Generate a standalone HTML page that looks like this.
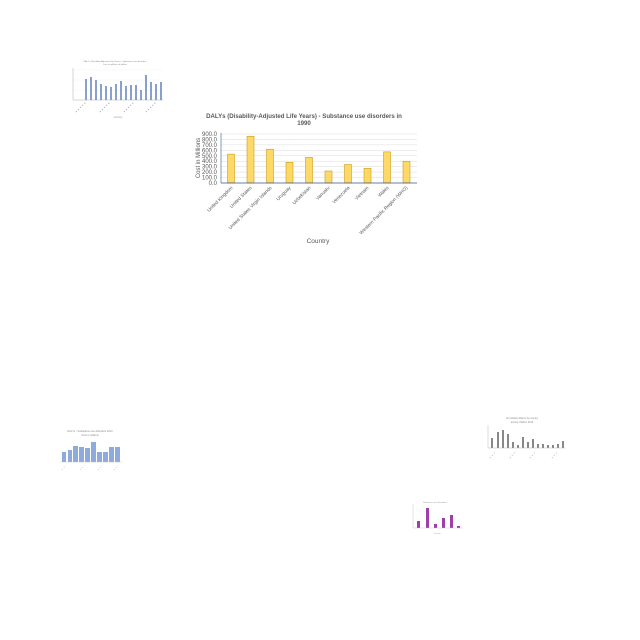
<!DOCTYPE html>
<html><head><meta charset="utf-8"><style>
html,body{margin:0;padding:0;background:#fff;width:640px;height:640px;overflow:hidden}
svg{display:block;font-family:"Liberation Sans",sans-serif}
</style></head><body>
<svg width="640" height="640" viewBox="0 0 640 640">
<g fill="#595959">
<text x="304" y="118" font-size="6.1" font-weight="bold" text-anchor="middle">DALYs (Disability-Adjusted Life Years) - Substance use disorders in</text>
<text x="304" y="125" font-size="6.1" font-weight="bold" text-anchor="middle">1990</text>
</g>
<g stroke="#d9d9d9" stroke-width="0.5">
<line x1="221" x2="417" y1="134" y2="134"/><line x1="221" x2="417" y1="139.4" y2="139.4"/>
<line x1="221" x2="417" y1="144.9" y2="144.9"/><line x1="221" x2="417" y1="150.3" y2="150.3"/>
<line x1="221" x2="417" y1="155.8" y2="155.8"/><line x1="221" x2="417" y1="161.2" y2="161.2"/>
<line x1="221" x2="417" y1="166.7" y2="166.7"/><line x1="221" x2="417" y1="172.1" y2="172.1"/>
<line x1="221" x2="417" y1="177.6" y2="177.6"/>
</g>
<g fill="#595959" font-size="6" text-anchor="end">
<text x="217" y="136">900.0</text><text x="217" y="141.4">800.0</text><text x="217" y="146.9">700.0</text>
<text x="217" y="152.3">600.0</text><text x="217" y="157.8">500.0</text><text x="217" y="163.2">400.0</text>
<text x="217" y="168.7">300.0</text><text x="217" y="174.1">200.0</text><text x="217" y="179.6">100.0</text>
<text x="217" y="185">0.0</text>
</g>
<text transform="translate(200,158) rotate(-90)" font-size="6" fill="#595959" text-anchor="middle">Cost in Millions</text>
<g fill="#FFD966" stroke="#BF9000" stroke-width="0.5">
<rect x="227.5" y="154.1" width="7" height="28.9"/>
<rect x="247" y="136.2" width="7" height="46.8"/>
<rect x="266.5" y="149.2" width="7" height="33.8"/>
<rect x="286" y="162.3" width="7" height="20.7"/>
<rect x="305.5" y="157.4" width="7" height="25.6"/>
<rect x="325" y="171" width="7" height="12"/>
<rect x="344.5" y="164.5" width="7" height="18.5"/>
<rect x="364" y="168.3" width="7" height="14.7"/>
<rect x="383.5" y="151.9" width="7" height="31.1"/>
<rect x="403" y="161.2" width="7" height="21.8"/>
</g>
<line x1="221" x2="417" y1="183" y2="183" stroke="#2F5597" stroke-width="0.8"/>
<line x1="221" x2="221" y1="133" y2="183" stroke="#2F5597" stroke-width="0.6"/>
<g fill="#595959" font-size="4.8" text-anchor="end">
<text transform="translate(233,188) rotate(-45)">United Kingdom</text>
<text transform="translate(252,188) rotate(-45)">United States</text>
<text transform="translate(272,188) rotate(-45)">United States Virgin Islands</text>
<text transform="translate(291,188) rotate(-45)">Uruguay</text>
<text transform="translate(311,188) rotate(-45)">Uzbekistan</text>
<text transform="translate(330,188) rotate(-45)">Vanuatu</text>
<text transform="translate(350,188) rotate(-45)">Venezuela</text>
<text transform="translate(369,188) rotate(-45)">Vietnam</text>
<text transform="translate(389,188) rotate(-45)">Wales</text>
<text transform="translate(408,188) rotate(-45)">Western Pacific Region (WHO)</text>
</g>
<text x="318" y="243" font-size="6.5" fill="#595959" text-anchor="middle">Country</text>

<g fill="#888" font-size="2.2" text-anchor="middle">
<text x="115" y="62">DALYs (Disability-Adjusted Life Years) - Substance use disorders</text>
<text x="115" y="65">Cost in millions of dollars</text>
</g>
<g stroke="#eee" stroke-width="0.4">
<line x1="72" x2="163" y1="70" y2="70"/><line x1="72" x2="163" y1="80" y2="80"/><line x1="72" x2="163" y1="90" y2="90"/>
</g>
<g stroke="#3A62B0" stroke-width="1.2">
<line x1="86" x2="86" y1="100" y2="79"/><line x1="91" x2="91" y1="100" y2="77"/><line x1="96" x2="96" y1="100" y2="80"/>
<line x1="101" x2="101" y1="100" y2="84"/><line x1="106" x2="106" y1="100" y2="86"/><line x1="111" x2="111" y1="100" y2="87"/>
<line x1="116" x2="116" y1="100" y2="84"/><line x1="121" x2="121" y1="100" y2="81"/><line x1="126" x2="126" y1="100" y2="86"/>
<line x1="131" x2="131" y1="100" y2="85"/><line x1="136" x2="136" y1="100" y2="85"/><line x1="141" x2="141" y1="100" y2="90"/>
<line x1="146" x2="146" y1="100" y2="75"/><line x1="151" x2="151" y1="100" y2="82"/><line x1="156" x2="156" y1="100" y2="84"/>
<line x1="161" x2="161" y1="100" y2="82"/>
</g>
<line x1="73" x2="163" y1="100" y2="100" stroke="#999" stroke-width="0.4"/>
<line x1="73" x2="73" y1="68" y2="100" stroke="#999" stroke-width="0.4"/>
<g stroke="#aaa" stroke-width="1.2" stroke-dasharray="1 2"><line x1="76" y1="112" x2="86" y2="102"/><line x1="100" y1="112" x2="110" y2="102"/><line x1="124" y1="112" x2="134" y2="102"/><line x1="146" y1="112" x2="156" y2="102"/></g>
<text x="118" y="118" font-size="2.5" fill="#999" text-anchor="middle">Country</text>

<g fill="#888" font-size="2.6" text-anchor="middle">
<text x="90" y="432">DALYs - Substance use disorders 2013</text>
<text x="90" y="436">Cost in millions</text>
</g>
<g fill="#8FAADC">
<rect x="62" y="452" width="4" height="10"/><rect x="68" y="450" width="4" height="12"/><rect x="73" y="446" width="5" height="16"/>
<rect x="79" y="447" width="5" height="15"/><rect x="85" y="448" width="5" height="14"/><rect x="91" y="442" width="5" height="20"/>
<rect x="97" y="452" width="5" height="10"/><rect x="103" y="452" width="5" height="10"/><rect x="109" y="447" width="5" height="15"/>
<rect x="115" y="447" width="5" height="15"/>
</g>
<line x1="60" x2="122" y1="462" y2="462" stroke="#bbb" stroke-width="0.4"/>
<g stroke="#ccc" stroke-width="1" stroke-dasharray="1 2"><line x1="62" y1="470" x2="66" y2="465"/><line x1="80" y1="470" x2="84" y2="465"/><line x1="98" y1="470" x2="102" y2="465"/><line x1="114" y1="470" x2="118" y2="465"/></g>

<g fill="#888" font-size="2.4" text-anchor="middle">
<text x="522" y="419">Air pollution DALYs by country</text>
<text x="522" y="423">among children 2016</text>
</g>
<g fill="#888">
<rect x="491" y="438" width="2" height="10"/><rect x="497" y="432" width="2" height="16"/><rect x="502" y="430" width="2" height="18"/>
<rect x="507" y="434" width="2" height="14"/><rect x="512" y="442" width="2" height="6"/><rect x="517" y="445" width="2" height="3"/>
<rect x="522" y="437" width="2" height="11"/><rect x="527" y="442" width="2" height="6"/><rect x="532" y="439" width="2" height="9"/>
<rect x="537" y="444" width="2" height="4"/><rect x="542" y="444" width="2" height="4"/><rect x="547" y="445" width="2" height="3"/>
<rect x="552" y="445" width="2" height="3"/><rect x="557" y="444" width="2" height="4"/><rect x="562" y="441" width="2" height="7"/>
</g>
<line x1="488" x2="565" y1="448" y2="448" stroke="#aaa" stroke-width="0.4"/>
<line x1="488" x2="488" y1="425" y2="448" stroke="#aaa" stroke-width="0.4"/>
<g stroke="#bbb" stroke-width="1" stroke-dasharray="1 2"><line x1="490" y1="458" x2="496" y2="451"/><line x1="510" y1="458" x2="516" y2="451"/><line x1="530" y1="458" x2="536" y2="451"/><line x1="552" y1="458" x2="558" y2="451"/></g>

<text x="435" y="503" font-size="2.2" fill="#999" text-anchor="middle">Substance use disorders</text>
<g fill="#9E3FA8">
<rect x="417" y="521" width="3" height="7"/><rect x="426" y="508" width="3" height="20"/><rect x="434" y="524" width="3" height="4"/>
<rect x="442" y="518" width="3" height="10"/><rect x="450" y="515" width="3" height="13"/><rect x="457" y="526" width="3" height="2"/>
</g>
<line x1="413" x2="463" y1="528" y2="528" stroke="#bbb" stroke-width="0.4"/>
<line x1="413" x2="413" y1="504" y2="528" stroke="#bbb" stroke-width="0.4"/>
<text x="437" y="534" font-size="2" fill="#aaa" text-anchor="middle">Country</text>
</svg>
</body></html>
